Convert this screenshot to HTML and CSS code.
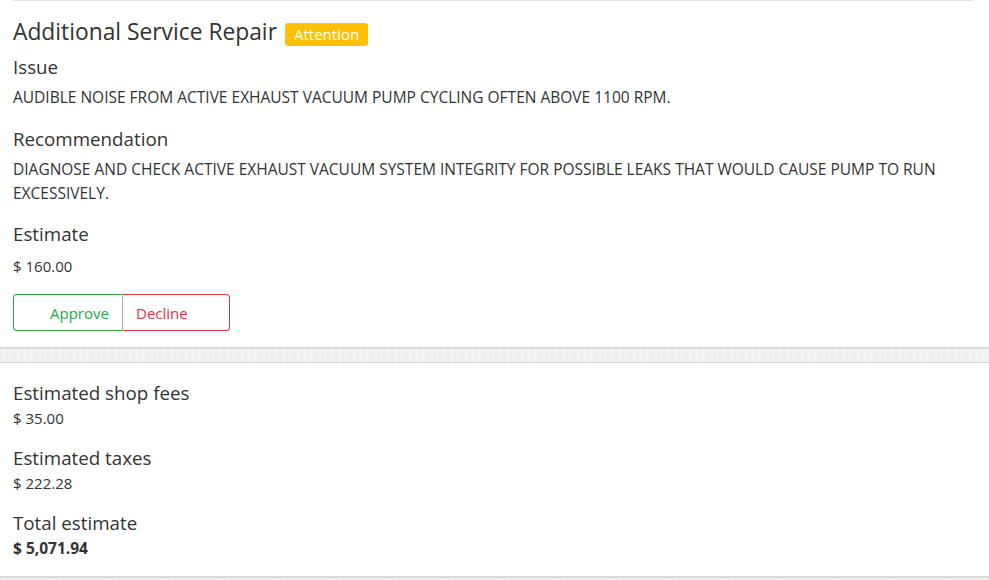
FILE: index.html
```html
<!DOCTYPE html>
<html lang="en">
<head>
<meta charset="utf-8">
<title>Additional Service Repair</title>
<link rel="stylesheet" href="styles.css">
</head>
<body>
<div class="top-rule"></div>
<section class="repair">
  <h2 class="title">Additional Service Repair <span class="badge">Attention</span></h2>
  <h3 class="label label-first">Issue</h3>
  <p class="text text-issue">AUDIBLE NOISE FROM ACTIVE EXHAUST VACUUM PUMP CYCLING OFTEN ABOVE 1100 RPM.</p>
  <h3 class="label label-rec">Recommendation</h3>
  <p class="text">DIAGNOSE AND CHECK ACTIVE EXHAUST VACUUM SYSTEM INTEGRITY FOR POSSIBLE LEAKS THAT WOULD CAUSE PUMP TO RUN EXCESSIVELY.</p>
  <h3 class="label">Estimate</h3>
  <p class="price">$ 160.00</p>
  <div class="btn-group">
    <button class="btn btn-approve">Approve</button>
    <button class="btn btn-decline">Decline</button>
  </div>
</section>
<div class="band"></div>
<section class="totals">
  <h3 class="label label-first">Estimated shop fees</h3>
  <p class="value">$ 35.00</p>
  <h3 class="label">Estimated taxes</h3>
  <p class="value">$ 222.28</p>
  <h3 class="label">Total estimate</h3>
  <p class="value total">$ 5,071.94</p>
</section>
<div class="band band-bottom"></div>
</body>
</html>
```

FILE: styles.css
```css
* { box-sizing: border-box; }
html, body { margin: 0; padding: 0; background: #fff; }
body {
  font-family: "Open Sans", "Noto Sans", sans-serif;
  color: #333;
  width: 989px;
  height: 580px;
  overflow: hidden;
}
.top-rule {
  height: 1px;
  background: #e3e3e3;
  margin: 0 16px 0 13px;
}
.repair, .totals { padding: 0 16px 0 13px; }
.title {
  margin: 16px 0 0;
  font-size: 22.8px;
  line-height: 30px;
  font-weight: 400;
  color: #333;
  display: flex;
  align-items: baseline;
  gap: 8px;
}
.badge {
  display: inline-block;
  background: #ffc107;
  color: #fff;
  font-size: 15px;
  line-height: 23px;
  height: 23px;
  padding: 0 9px;
  border-radius: 3px;
  font-weight: 400;
}
.label {
  margin: 17px 0 0;
  font-size: 18.75px;
  line-height: 24px;
  font-weight: 400;
  color: #333;
}
.repair .label-first { margin-top: 8px; }
.repair .label-rec { margin-top: 18px; }
.text {
  margin: 6px 0 0;
  font-size: 15.5px;
  line-height: 24px;
  color: #333;
}
.price {
  margin: 8px 0 0;
  font-size: 15px;
  line-height: 24px;
  color: #333;
}
.btn-group {
  display: flex;
  margin-top: 16px;
  width: 217px;
  height: 37px;
}
.btn {
  font-family: inherit;
  font-size: 15px;
  line-height: 24px;
  background: #fff;
  text-align: left;
  cursor: pointer;
  margin: 0;
}
.btn-approve {
  width: 110px;
  color: #28a745;
  border: 1px solid #28a745;
  border-right: 1px solid #a6a6a6;
  border-radius: 4px 0 0 4px;
  padding: 0 8px 0 36px;
}
.btn-decline {
  width: 107px;
  color: #dc3545;
  border: 1px solid #dc3545;
  border-left: none;
  border-radius: 0 4px 4px 0;
  padding: 0 8px 0 13px;
}
.band {
  margin-top: 16px;
  height: 16px;
  border-top: 2px solid #dadada;
  border-bottom: 1px solid #d6d6d6;
  background-color: #f1f1f1;
  background-image: repeating-linear-gradient(90deg, rgba(0,0,0,0.015) 0 1px, transparent 1px 3px, rgba(255,255,255,0.4) 3px 4px, transparent 4px 7px);
}
.band-bottom { margin-top: 16px; }
.totals .label { margin-top: 16px; }
.totals .label-first { margin-top: 18px; }
.value {
  margin: 1px 0 0;
  font-size: 15px;
  line-height: 24px;
  color: #333;
}
.total { font-weight: 700; font-size: 15.5px; }
```
